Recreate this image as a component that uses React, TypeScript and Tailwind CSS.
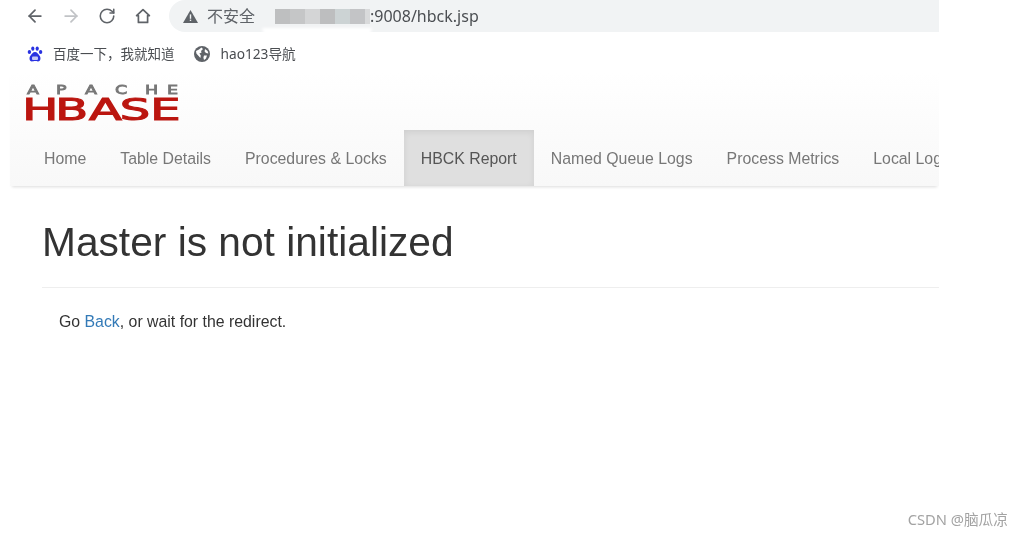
import React from 'react';
import { ArrowLeft, ArrowRight, RotateCw } from 'lucide-react';

const NAV_LINKS = ['Home', 'Table Details', 'Procedures & Locks', 'HBCK Report', 'Named Queue Logs', 'Process Metrics', 'Local Logs'];
const ACTIVE_LINK = 'HBCK Report';

// blurred-out part of the address
const MOSAIC = ['bg-[#bebfc0] w-[15px]', 'bg-[#c5c6c7] w-[15px]', 'bg-[#d4d5d6] w-[15px]', 'bg-[#bdbebf] w-[15px]', 'bg-[#ccd3d4] w-[15px]', 'bg-[#c3c4c6] w-[15px]', 'bg-[#d9dadb] w-[5px]'];

const HomeIcon = () => (
  <svg width="16" height="16" viewBox="0 0 16 16" fill="none" stroke="#5f6368" strokeWidth="1.7">
    <path d="M8 1.6 1.6 7.6H3.4V14.4H12.6V7.6H14.4Z" strokeLinejoin="round" />
  </svg>
);

const WarningIcon = () => (
  <svg width="15" height="13" viewBox="0 0 15 13">
    <path d="M7.5 0 15 13H0Z" fill="#5f6368" />
    <rect x="6.8" y="4.4" width="1.4" height="4.4" fill="#f1f3f4" />
    <rect x="6.8" y="9.6" width="1.4" height="1.4" fill="#f1f3f4" />
  </svg>
);

const BaiduIcon = () => (
  <svg width="16" height="16" viewBox="0 0 16 16" fill="#2932e1">
    <ellipse cx="2.4" cy="6" rx="1.7" ry="2.1" />
    <ellipse cx="5.8" cy="2.6" rx="1.6" ry="2.2" />
    <ellipse cx="10.2" cy="2.6" rx="1.6" ry="2.2" />
    <ellipse cx="13.6" cy="6" rx="1.7" ry="2.1" />
    <path d="M8 6C5.8 6 5 8 3.6 9.4 2 11 2 15.4 5 15.4 6.4 15.4 7 15 8 15S9.6 15.4 11 15.4C14 15.4 14 11 12.4 9.4 11 8 10.2 6 8 6Z" />
    <rect x="5" y="10.4" width="6" height="3.6" rx="1" fill="#c7c9f5" />
  </svg>
);

const GlobeIcon = () => (
  <svg width="16" height="16" viewBox="0 0 16 16">
    <circle cx="8" cy="8" r="8" fill="#5f6368" />
    <path d="M2 5 5 3.4 7.4 1.6 9 3 7 5 7.6 6.6 5.4 7.4 6.8 9.6 6.4 12 4.6 10 2.4 7.6ZM10 9.6H13L12 12.6 10 14 9.4 11.6ZM11 3 13.6 5 14.4 7.4 12 7 10.6 5.4Z" fill="#ffffff" />
  </svg>
);

const HBaseLogo = () => (
  <svg width="153" height="40" viewBox="0 0 153 40" className="overflow-visible">
    <g transform="scale(1.35 1)">
      <text x="0 21.5 43 65.2 87.4 103.7" y="11.5" fontFamily="'DejaVu Sans', sans-serif" fontSize="13" stroke="#777777" strokeWidth="0.8" fill="#777777">
        APACHE
      </text>
    </g>
    <g transform="scale(1.6 1)">
      <text x="-3 17.6 38.8 58 77" y="38.4" fontFamily="'DejaVu Sans', sans-serif" fontSize="30" stroke="#bb1610" strokeWidth="1.1" fill="#bb1610">
        HBASE
      </text>
    </g>
  </svg>
);

const App: React.FC = () => {
  return (
    <div className="relative h-[535px] w-[1023px] overflow-hidden bg-white font-['Liberation_Sans',sans-serif] text-[#333333] blur-[0.3px]">
      <div className="w-[939px] overflow-hidden">
        {/* browser toolbar */}
        <div className="flex h-[36px] items-start">
          <div className="flex items-center pl-[25px] pt-[6px]">
            <ArrowLeft size={20} strokeWidth={2.1} color="#5f6368" />
            <ArrowRight size={20} strokeWidth={2.1} color="#c1c3c6" className="ml-[16px]" />
            <RotateCw size={18} strokeWidth={2.1} color="#5f6368" className="ml-[17px]" />
            <div className="ml-[19px]"><HomeIcon /></div>
          </div>
          <div className="ml-[18px] flex h-[32px] flex-1 items-center rounded-l-[16px] bg-[#f1f3f4] pl-[14px] font-['Noto_Sans','Noto_Sans_CJK_SC',sans-serif] text-[16px] text-[#5f6368]">
            <WarningIcon />
            <span className="ml-[9px]">不安全</span>
            <div className="ml-[20px] flex h-[32px] items-center">
              {MOSAIC.map((cls, i) => (
                <div key={i} className={`h-[15px] blur-[0.5px] ${cls}`} />
              ))}
            </div>
            <span className="text-[#4b4e52]">:9008/hbck.jsp</span>
          </div>
        </div>

        {/* bookmarks */}
        <div className="flex h-[36px] items-center pl-[27px] font-['Noto_Sans','Noto_Sans_CJK_SC',sans-serif] text-[13.5px] text-[#4a4d51]">
          <BaiduIcon />
          <span className="ml-[10px]">百度一下，我就知道</span>
          <div className="ml-[19px]"><GlobeIcon /></div>
          <span className="ml-[11px] text-[13.7px]">hao123导航</span>
        </div>

        {/* site navbar */}
        <div className="ml-[10px] bg-gradient-to-b from-white to-[#f8f8f8] shadow-[0_3px_3px_-2px_rgba(0,0,0,0.14)]">
          <div className="h-[58px] pl-[17px] pt-[10px]">
            <HBaseLogo />
          </div>
          <div className="flex h-[56px] whitespace-nowrap pl-[17px] text-[15.85px] text-[#777777]">
            {NAV_LINKS.map((link) => (
              <div
                key={link}
                className={`flex items-center px-[17px] pt-[1px] ${link === ACTIVE_LINK ? 'bg-[#dfdfdf] text-[#555555] shadow-[inset_0_2px_6px_rgba(0,0,0,0.08)]' : ''}`}
              >
                {link}
              </div>
            ))}
          </div>
        </div>

        {/* page body */}
        <div className="pl-[42px]">
          <h1 className="mt-[30px] border-b border-[#eeeeee] pb-[19px] text-[40.7px] leading-[52px]">Master is not initialized</h1>
          <p className="mt-[24px] pl-[17px] text-[15.85px] leading-[20px]">
            Go <a href="#" className="text-[#337ab7]">Back</a>, or wait for the redirect.
          </p>
        </div>
      </div>

      {/* smear left by the blurring of the address */}
      <div className="absolute left-[262px] top-[28px] h-[9px] w-[110px] rounded-b-full bg-white blur-[1.5px]" />

      {/* watermark */}
      <div className="absolute right-[15px] top-[510px] font-['Noto_Sans','Noto_Sans_CJK_SC',sans-serif] text-[14.7px] leading-[18px] text-[#a3a3a3]">
        CSDN @脑瓜凉
      </div>
    </div>
  );
};

export default App;
